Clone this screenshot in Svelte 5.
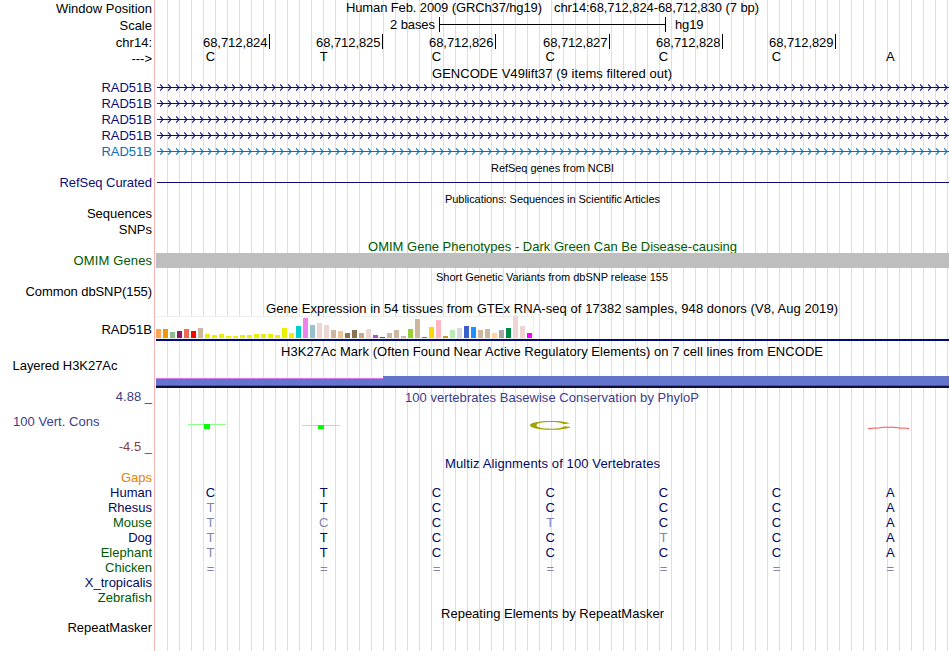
<script>
  // Track drawings use browser x coordinates; the viewBox starts at the end of the label column.
  const LEFT = 155;
  const WIDTH = 795;

  const navy = '#0c0c78';
  const deep = '#000a64';
  const green = '#005a00';

  const columns = [210.5, 323.8, 436.5, 550.3, 663.5, 776.5, 890.3];
  const ticks = [269, 382, 495, 609, 722, 835];
  const arrows = Array.from({ length: 99 }, (_, i) => 160.2 + i * 8);

  const tissues = [
    [9, '#ffa54f'], [9, '#ee9a00'], [6, '#8fbc8f'], [7, '#8b1c62'], [9, '#ee6a50'], [7, '#ff0000'],
    [10, '#cdb79e'], [4, '#eeee00'], [3, '#eeee00'], [4, '#eeee00'], [2, '#eeee00'], [2, '#eeee00'],
    [3, '#eeee00'], [3, '#eeee00'], [4, '#eeee00'], [4, '#eeee00'], [4, '#eeee00'], [3, '#eeee00'],
    [10, '#eeee00'], [5, '#eeee00'], [12, '#00cdcd'], [20, '#ee82ee'], [13, '#9ac0cd'], [15, '#eed5d2'],
    [13, '#eed5d2'], [8, '#cdb79e'], [7, '#eec591'], [5, '#8b7355'], [8, '#8b7355'], [5, '#cdaa7d'],
    [9, '#eed5d2'], [3, '#b452cd'], [1, '#7a378b'], [5, '#cdb79e'], [8, '#cdb79e'], [2, '#cdb79e'],
    [9, '#9acd32'], [19, '#cdb79e'], [1, '#7a67ee'], [11, '#ffd700'], [18, '#ffb6c1'], [2, '#cd9b1d'],
    [8, '#b4eeb4'], [10, '#d9d9d9'], [12, '#3a5fcd'], [11, '#1e90ff'], [8, '#cdb79e'], [9, '#cdb79e'],
    [5, '#ffd39b'], [8, '#a6a6a6'], [10, '#008b45'], [22, '#eed5d2'], [12, '#eed5d2'], [5, '#ff00ff']
  ];

  // Width 0 leaves the text at its natural width.
  const label = (text, y = 12, color = '#000', x, w = 0) => ({ text, y, color, x, w });
  const title = (text, x, end, y = 12, color = '#000', size = 13) => ({ text, x, w: end - x, y, color, size });
  const gene = (color) => ({ h: 16, kind: 'gene', labels: [label('RAD51B', 12, color)], color });
  const species = (name, color, seq = '', faded = '') => ({
    h: 15, kind: 'bases', y: 12, labels: [label(name, 12, color)], seq, faded, color: deep
  });

  const rows = [
    { h: 17, labels: [label('Window Position', 13)], titles: [
      title('Human Feb. 2009 (GRCh37/hg19)', 346, 542),
      title('chr14:68,712,824-68,712,830 (7 bp)', 554, 759)
    ] },
    { h: 17, kind: 'scale', labels: [label('Scale', 13)] },
    { h: 16, kind: 'ruler', labels: [label('chr14:', 13)] },
    { h: 16, kind: 'bases', y: 11, labels: [label('--->', 13)], seq: 'CTCCCCA', faded: '', color: '#000' },
    { h: 14, titles: [title('GENCODE V49lift37 (9 items filtered out)', 432, 672)] },
    gene(navy), gene(navy), gene(navy), gene(navy), gene('#0c6eb4'),
    { h: 15, titles: [title('RefSeq genes from NCBI', 491, 614, 12, '#000', 11)] },
    { h: 16, kind: 'line', labels: [label('RefSeq Curated', 12, navy, 0, 92.5)] },
    { h: 15, titles: [title('Publications: Sequences in Scientific Articles', 445, 660, 12, '#000', 11)] },
    { h: 16, labels: [label('Sequences')] },
    { h: 16, labels: [label('SNPs')] },
    { h: 15, titles: [title('OMIM Gene Phenotypes - Dark Green Can Be Disease-causing', 368, 737, 13, green)] },
    { h: 16, kind: 'omim', labels: [label('OMIM Genes', 12, green, 0, 78.5)] },
    { h: 15, titles: [title('Short Genetic Variants from dbSNP release 155', 436, 668, 12, '#000', 11)] },
    { h: 16, labels: [label('Common dbSNP(155)', 12, '#000', 0, 126.5)] },
    { h: 16, titles: [title('Gene Expression in 54 tissues from GTEx RNA-seq of 17382 samples, 948 donors (V8, Aug 2019)', 266, 838, 13)] },
    { h: 27, kind: 'gtex', labels: [label('RAD51B', 18)] },
    { h: 15, titles: [title('H3K27Ac Mark (Often Found Near Active Regulatory Elements) on 7 cell lines from ENCODE', 281, 823, 13)] },
    { h: 31, kind: 'h3k27', labels: [label('Layered H3K27Ac', 12, '#000', 12.5, 105)] },
    { h: 17, labels: [label('4.88 _', 12, '#3c3c8c')], titles: [
      title('100 vertebrates Basewise Conservation by PhyloP', 405, 699, 13, '#3c3c8c')
    ] },
    { h: 49, kind: 'phylop', labels: [
      label('100 Vert. Cons', 20, '#3c3c8c', 13, 86.5),
      label('-4.5 _', 45, '#8c3c3c')
    ] },
    { h: 15, titles: [title('Multiz Alignments of 100 Vertebrates', 445, 660, 13, deep)] },
    species('Gaps', '#e68200'),
    species('Human', deep, 'CTCCCCA'),
    species('Rhesus', deep, 'TTCCCCA', '0'),
    species('Mouse', green, 'TCCTCCA', '013'),
    species('Dog', deep, 'TTCCTCA', '04'),
    species('Elephant', green, 'TTCCCCA', '0'),
    species('Chicken', green, '=======', '0123456'),
    species('X_tropicalis', deep),
    species('Zebrafish', green),
    { h: 15, titles: [title('Repeating Elements by RepeatMasker', 441, 664, 13)] },
    { h: 31, labels: [label('RepeatMasker')] }
  ];
</script>

<main class="browser">
  {#each rows as row}
    <div class="row">
      <svg width={LEFT} height={row.h}>
        {#each row.labels ?? [] as l}
          <text
            x={l.x || 152}
            y={l.y}
            fill={l.color}
            text-anchor={l.x ? 'start' : 'end'}
            textLength={l.w || undefined}>{l.text}</text>
        {/each}
      </svg>
      <svg width={WIDTH} height={row.h} viewBox="{LEFT} 0 {WIDTH} {row.h}">
        {#if row.kind === 'scale'}
          <text x="390" y="12" textLength="45">2 bases</text>
          <path d="M439.5 0V15M439.5 7.5H665.5M665.5 0V15" class="ink" />
          <text x="675" y="12" textLength="28.5">hg19</text>
        {:else if row.kind === 'ruler'}
          {#each ticks as x, i}
            <text x={x - 66} y="13" textLength="64.5">68,712,82{4 + i}</text>
            <rect {x} y="0" width="1" height="15" />
          {/each}
        {:else if row.kind === 'bases'}
          {#each row.seq as base, i}
            <text
              x={columns[i]}
              y={row.y + (base === '=' ? 1 : 0)}
              text-anchor="middle"
              fill={row.faded.includes(String(i)) ? '#8084b2' : row.color}>{base}</text>
          {/each}
        {:else if row.kind === 'gene'}
          <rect x="157" y="7" width="792" height="1" fill={row.color} />
          {#each arrows as x}
            <path d="M{x} 4.3L{x + 2.7} 7.5L{x} 10.7" fill="none" stroke={row.color} stroke-width="1.1" />
          {/each}
        {:else if row.kind === 'line'}
          <rect x="157" y="7" width="792" height="1" fill={navy} />
        {:else if row.kind === 'omim'}
          <rect x="156" y="0" width="793" height="15" fill="#bebebe" />
        {:else if row.kind === 'gtex'}
          <rect x="156" y="0" width="378" height="23" fill="#eee" />
          <rect x="156" y="1" width="377" height="21" fill="#fff" />
          {#each tissues as [height, color], i}
            <rect x={156 + i * 7} y={22 - height} width="5" {height} fill={color} />
          {/each}
          <rect x="156" y="23" width="793" height="2" fill="#000a78" />
        {:else if row.kind === 'h3k27'}
          <rect x="156" y="20" width="227" height="1" fill="#d278f0" />
          <rect x="156" y="21" width="227" height="6" fill="#6274cc" />
          <rect x="383" y="18" width="566" height="9" fill="#6274cc" />
          <rect x="156" y="27" width="793" height="1" fill="#2c5ad2" />
          <rect x="156" y="28" width="793" height="2" fill="#100c3c" />
        {:else if row.kind === 'phylop'}
          <rect x="188" y="18" width="37.5" height="1" fill="#8cff8c" />
          <rect x="204" y="18" width="6" height="5" fill="#0f0" />
          <rect x="302" y="19" width="37.5" height="1" fill="#8cff8c" />
          <rect x="318" y="19" width="6" height="4" fill="#0f0" />
          <path
            d="M570 17.6C566 15.6 559 15 551.5 15C539 15 530 16.8 530 19.2C530 21.8 539 23.8 551 23.8C560 23.8 567 22.7 571 20.9L564.5 20.2C562 22 557 22.7 551 22.7C542 22.7 536.5 21.5 536.5 19.3C536.5 17.3 542 16.1 551 16.1C557 16.1 561 16.7 563.5 18.1Z"
            fill="#a0a000" />
          <path
            d="M868 22.6L873 22.1H878L884 21.2H893L900 22.1H905L909 22.6"
            fill="none"
            stroke="#ff3c3c"
            stroke-width="0.9" />
        {/if}
        {#each row.titles ?? [] as t}
          <text x={t.x} y={t.y} fill={t.color} font-size={t.size} textLength={t.w}>{t.text}</text>
        {/each}
      </svg>
    </div>
  {/each}
</main>

<style>
  :global(body) {
    margin: 0;
    background: #fff;
  }

  .browser {
    width: 950px;
    height: 651px;
    overflow: hidden;
    display: flex;
    flex-direction: column;
    font-family: 'Liberation Sans', Arial, sans-serif;
    background:
      linear-gradient(#ffb4b4, #ffb4b4) 154px 0 / 1px 100% no-repeat,
      repeating-linear-gradient(90deg, #dcdcf8 0 1px, transparent 1px 12px) 167px 0 / 783px 100% no-repeat,
      #fff;
  }

  .row {
    display: flex;
    flex: none;
  }

  svg {
    display: block;
    flex: none;
    overflow: visible;
    font-size: 13px;
  }

  rect {
    shape-rendering: crispEdges;
  }

  .ink {
    fill: none;
    stroke: #000;
    stroke-width: 1;
  }
</style>
